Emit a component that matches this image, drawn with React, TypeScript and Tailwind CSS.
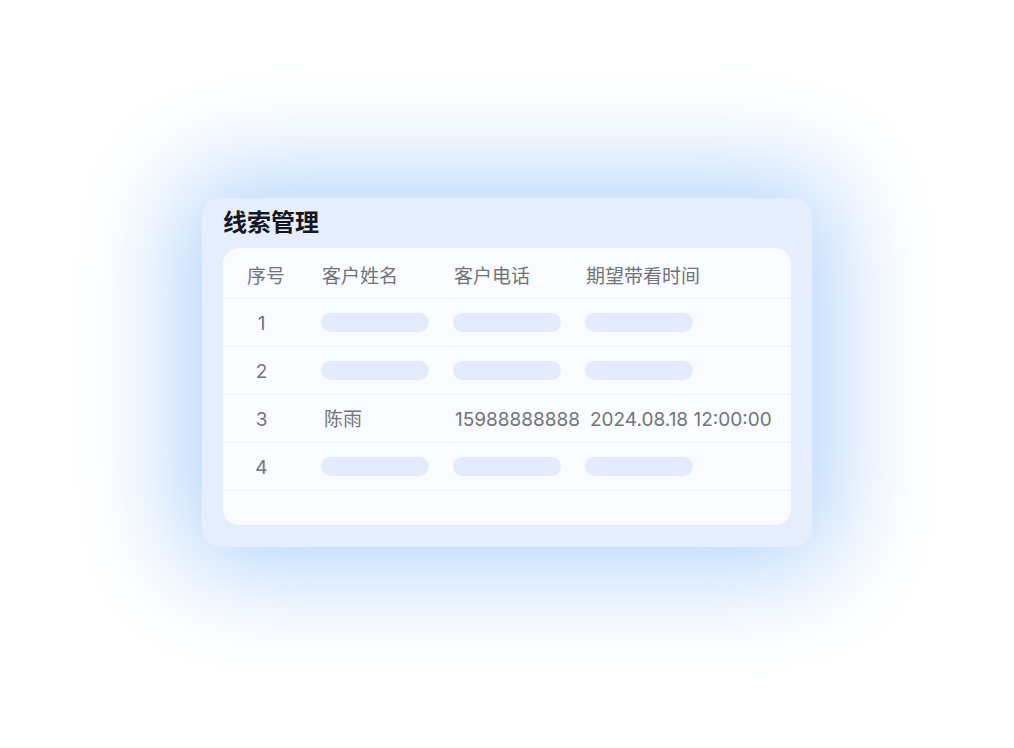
const font = { fontFamily: 'Inter, "Noto Sans CJK SC", sans-serif' };

const rows: (null | { name: string; phone: string; time: string })[] = [
  null,
  null,
  { name: "陈雨", phone: "15988888888", time: "2024.08.18 12:00:00" },
  null,
];

function Pill() {
  return <div className="h-[19px] w-[108px] rounded-full bg-[#e3ebfd]" />;
}

export default function App() {
  return (
    <div className="flex min-h-[748px] w-full items-center justify-center bg-white pb-[3px]" style={font}>
      <div className="w-[610px] rounded-[18px] bg-[#e6eefd] px-[21px] pb-[22px] pt-[7px] shadow-[0_0_105px_25px_#b6d5fd]">
        <h1 className="text-[24px] font-bold leading-8 text-[#15171c]" style={{ fontFamily: '"Noto Sans CJK SC", sans-serif' }}>
          线索管理
        </h1>
        <div className="mt-[11px] rounded-2xl bg-[#f9fbff] pb-[34px]">
          <div className="grid h-[51px] grid-cols-[98px_132px_132px_1fr] items-center border-b border-[#ebeff7] pt-[9px] text-[19px] text-[#737376]">
            <span className="pl-[24px]">序号</span>
            <span className="pl-px">客户姓名</span>
            <span className="pl-px">客户电话</span>
            <span className="pl-px">期望带看时间</span>
          </div>
          {rows.map((row, i) => (
            <div
              key={i}
              className="grid h-[48px] grid-cols-[98px_132px_132px_1fr] items-center border-b border-[#ebeff7] text-[19px] text-[#737376]"
            >
              <span className="w-[53px] pl-[24px] pt-[3px] text-center">{i + 1}</span>
              {row ? (
                <>
                  <span className="pl-[3px] pt-[3px]">{row.name}</span>
                  <span className="pl-[2px] pt-[3px] whitespace-nowrap">{row.phone}</span>
                  <span className="pl-[5px] pt-[3px] whitespace-nowrap">{row.time}</span>
                </>
              ) : (
                <>
                  <Pill />
                  <Pill />
                  <Pill />
                </>
              )}
            </div>
          ))}
        </div>
      </div>
    </div>
  );
}
